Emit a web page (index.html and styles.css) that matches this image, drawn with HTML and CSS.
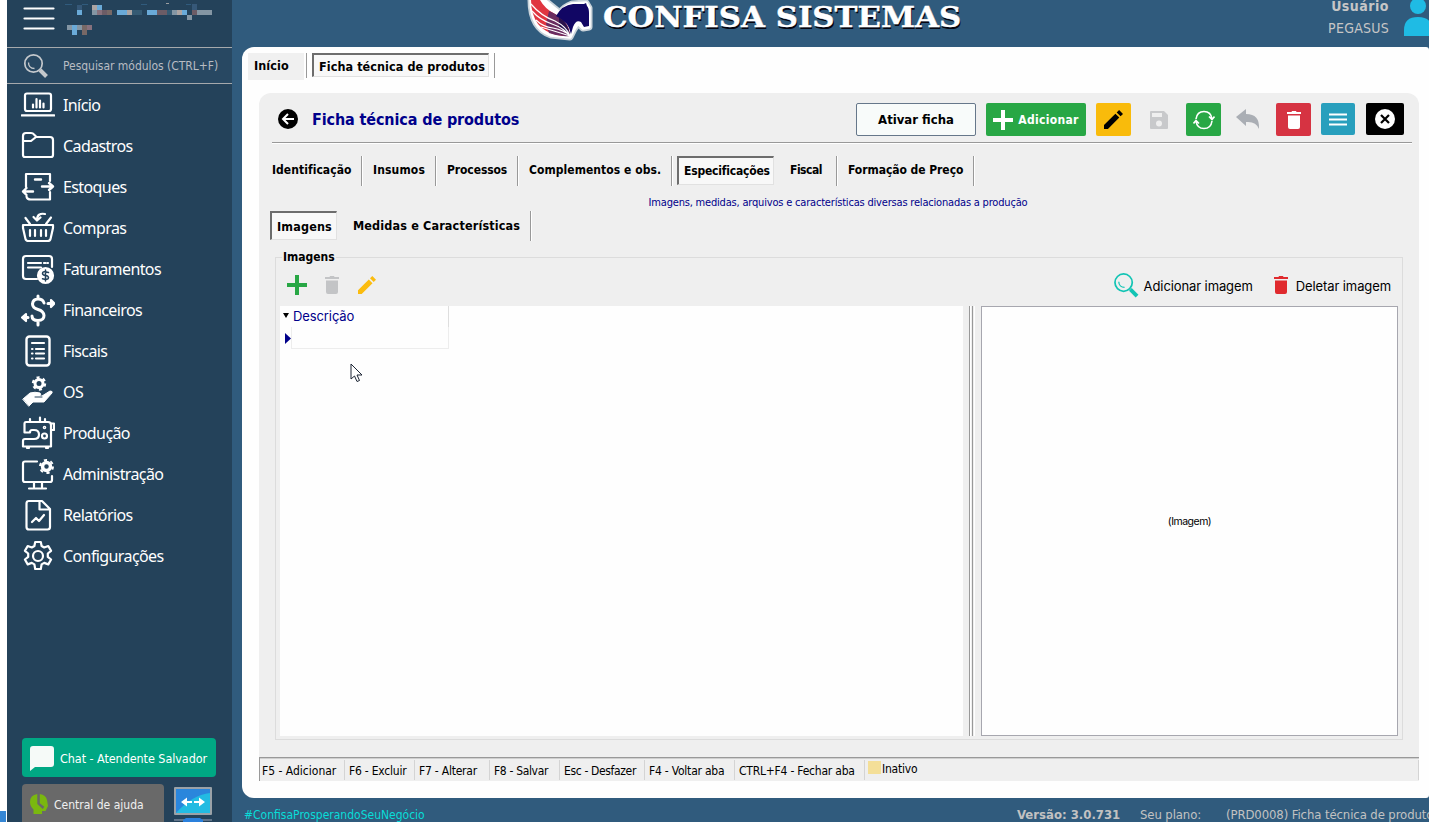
FILE: index.html
```html
<!DOCTYPE html>
<html lang="pt-BR">
<head>
<meta charset="utf-8">
<title>Confisa Sistemas</title>
<link rel="stylesheet" href="styles.css">
</head>
<body>
<div class="edge"><div class="edge-mark"></div></div>
<aside class="sidebar">
  <div class="side-head">
    <svg class="burger" width="32" height="32" viewBox="0 0 32 32"><path d="M1.500 8.500h29M1.500 18.500h29M1.500 28.500h29" stroke="#fff" stroke-width="2.200" stroke-linecap="round"/></svg>
    <svg class="mosaic" width="150" height="36" viewBox="0 0 150 36" shape-rendering="crispEdges">
      <path fill="#305b7d" d="M0 4h7v1H0zM17 4h6v1h-6zM76 4h6v1h-6zM121 4h5v1h-5z"/><path fill="#9a9da0" d="M101 3h3v1h-3z"/>
      <path fill="#365878" d="M12 5h5v5h-5zM127 4h5v6h-5z"/>
      <path fill="#6aaad8" d="M12 10h5v5h-5zM32 5h5v5h-5zM52 10h10v5H52zM82 10h10v5H82zM117 10h5v5h-5zM7 25h5v10H7z"/>
      <path fill="#aca4a2" d="M27 5h5v5h-5zM62 10h5v5h-5zM112 10h5v5h-5z"/>
      <path fill="#8496a4" d="M27 10h5v5h-5zM107 10h5v5h-5zM132 10h5v5h-5zM137 10h10v5h-10zM122 15h5v5h-5zM2 25h5v5H2zM12 25h5v5h-5z"/>
      <path fill="#87717d" d="M32 10h5v5h-5zM22 25h5v5h-5z"/><path fill="#6c5c66" d="M37 10h10v5H37zM92 10h10v5H92zM127 10h5v5h-5z"/><path fill="#776866" d="M42 10h5v5h-5zM17 25h5v10h-5z"/>
      <path fill="#355a73" d="M67 10h10v5H67zM102 10h5v5h-5z"/>
    </svg>
  </div>
  <div class="search">
    <svg width="26" height="26" viewBox="0 0 26 26" fill="none" stroke="#c4c8cc"><circle cx="10.500" cy="10.500" r="8.700" stroke-width="1.700"/><path d="M5.500 9.500c0 4 2.500 6 6 6" stroke-width="1.300"/><path d="M17 17l6.500 6.500" stroke-width="4"/></svg>
    <span>Pesquisar módulos (CTRL+F)</span>
  </div>
  <nav class="menu">
    <a><svg viewBox="0 0 34 34"><rect x="4" y="5.500" width="26" height="17.500" rx="2"/><path d="M.8 27.300h32.400M12 19.500v-3M15.500 19.500V11M19 19.500v-7M22.500 19.500v-4"/></svg><span>Início</span></a>
    <a><svg viewBox="0 0 34 34"><path d="M2 26V7q0-3 3-3h5q2 0 3 1.500l2.500 2.500H29q3 0 3 3v15q0 2-2 2H4q-2 0-2-2zM2 12h8l5-4"/></svg><span>Cadastros</span></a>
    <a><svg viewBox="0 0 34 34"><path d="M5 14V4h24v7M29 22v7.500H10q-4 0-4.500-3M5 14v3" /><path d="M14 9.500h6M21 16.500h11M28 13l4 3.500-4 3.500M12 21.500H2M5.500 18L2 21.500 5.500 25" stroke-width="2.400"/></svg><span>Estoques</span></a>
    <a><svg viewBox="0 0 34 34"><path d="M2 14h30v3l-2.500 11q-.5 2-3 2h-19q-2.500 0-3-2L2 17zM9 19v6M14 19v6M20 19v6M25 19v6M9 13L4.500 7M25 13l5-6.500M24 3c-5-1-8 1-8 6M12.500 6L16 9.500 19.500 6.500" stroke-width="2.200"/></svg><span>Compras</span></a>
    <a><svg viewBox="0 0 34 34"><path d="M16 27H5q-3 0-3-3V7q0-3 3-3h23q3 0 3 3v8M7 11h13M7 15.500h13M23 11h1.500M26.500 11h.5"/><circle cx="24.500" cy="23.500" r="7.500" fill="#fff"/><path d="M27.500 20.500q-6-2-6 .8 0 2 3 2.200 3 .4 3 2.300 0 2.400-6 1M24.500 18v11" stroke="#24425a" stroke-width="1.500"/></svg><span>Faturamentos</span></a>
    <a><svg viewBox="0 0 34 34"><path d="M23 10q-1-4-6-4T11.500 11q0 4 5.500 5.500t6 6q0 5-6 5t-6-4.500M17 3v3M17 28v4" stroke-width="3"/><path d="M27 10.500h4M24 24.500M7 24.500H3" stroke-width="3"/><path d="M30 7l3.500 3.500L30 14zM5 21l-4 3.500L5 28z" fill="#fff"/></svg><span>Financeiros</span></a>
    <a><svg viewBox="0 0 34 34"><rect x="5.500" y="2.500" width="23" height="29" rx="3" stroke-width="2.400"/><path d="M11 9h12M11 15h.5M15 15h8M11 19.500h.5M15 19.500h8M11 24.500h.5M15 24.500h8"/></svg><span>Fiscais</span></a>
    <a><svg viewBox="0 0 34 34"><circle cx="18" cy="8.500" r="4" stroke-width="3"/><circle cx="18" cy="8.500" r="6" stroke-dasharray="3 3.280" stroke-width="2.400" stroke-linecap="butt"/><path d="M2 24l7-6q5-1.500 10 0 2 2-1 3h-4 7l8-5q3 0 2 2l-8 9H12l-4 4z" fill="#fff" stroke-width="1"/><path d="M14 22h7" stroke="#24425a" stroke-width="1"/></svg><span>OS</span></a>
    <a><svg viewBox="0 0 34 34"><path d="M5 6h22q3 0 3 3v21.500H2V25q0-2 2-2h9q5 0 5-4.500T13 14H11q-2 0-2 2.500H3.500V8q0-2 1.500-2zM30.500 7.500H33V14h-2.500M9 3v3M19 1.500V5M24 3v3M6 32h2M25 32h2"/><circle cx="23.500" cy="20" r="2.500"/><circle cx="23.500" cy="11.500" r=".7"/></svg><span>Produção</span></a>
    <a><svg viewBox="0 0 34 34"><path d="M16 4.500H4q-2 0-2 2V23q0 2 2 2h25q2 0 2-2v-4M13 25v5M21 25v5M8 31.500h17"/><circle cx="25.500" cy="9.500" r="4" stroke-width="3.500"/><circle cx="25.500" cy="9.500" r="6.500" stroke-dasharray="3.200 3.600" stroke-width="2" stroke-linecap="butt"/></svg><span>Administração</span></a>
    <a><svg viewBox="0 0 34 34"><path d="M8 3h13l8 8v18q0 2.500-2.500 2.500H8Q5.500 31.500 5.500 29V5.500Q5.500 3 8 3zM18.500 3.500V11.500H28M11 24l4-4 3 3 5-6" stroke-width="2.200"/></svg><span>Relatórios</span></a>
    <a><svg viewBox="0 0 34 34"><circle cx="17" cy="17" r="5"/><path d="M14.200 3h5.600l.8 4 2.600 1.500 4.100-1.500 2.800 4.900-3.300 2.600v3.400l3.300 2.600-2.800 4.900-4.100-1.500-2.600 1.500-.8 4.600h-5.600l-.8-4.600-2.600-1.500-4.100 1.500-2.800-4.900 3.300-2.600v-3.400l-3.300-2.600L6.700 7l4.100 1.500L13.400 7z"/></svg><span>Configurações</span></a>
  </nav>
  <div class="chat"><svg width="24" height="25" viewBox="0 0 24 25"><path d="M0 25V3q0-3 3-3h18q3 0 3 3v15q0 3-3 3H5z" fill="#f6faf8"/></svg><span>Chat - Atendente Salvador</span></div>
  <div class="side-foot">
    <div class="help"><svg width="18" height="21" viewBox="0 0 18 21"><path d="M7.300 0v10l5.500 5 1.500-2.200-4.500-3.600V0Q16 1 17 6l1 6-2.500 5H12v3H3.500v-4.500Q0 12 0 8 0 1 7.300 0z" fill="#7ab80f"/></svg><span>Central de ajuda</span></div>
    <svg width="38" height="36" viewBox="0 0 38 36"><rect width="38" height="28" rx="1" fill="#9aa2a8"/><path d="M2 2h34v24H2z" fill="#2a86dc"/><path d="M2 26Q18 8 36 6v20z" fill="#22bbe2"/><path d="M7 15l6-4.500V14h5v2h-5v3.500zM31 15l-6-4.500V14h-5v2h5v3.500z" fill="#fff"/><path d="M0 33h38" stroke="#60748a" stroke-width="2"/><path d="M9 36v-3l3-2h14l3 2v3z" fill="#2a80dc"/></svg>
  </div>
</aside>
<main class="main">
  <header class="top">
    <div class="brand">
      <svg width="70" height="44" viewBox="0 0 70 44">
        <path id="mark" d="M8 0Q8 28 28 35l19 2 4-8 4-6 5 5 6-1V8l-3-5-14 1q-8 3-12 9L21 0z" fill="#fff" stroke="#c9d3da" stroke-width="7" stroke-linejoin="round"/>
        <path d="M8 0Q8 28 28 35l19 2 4-8 4-6 5 5 6-1V8l-3-5-14 1q-8 3-12 9L21 0z" fill="#fff" stroke="#fff" stroke-width="3.500" stroke-linejoin="round"/>
        <path d="M8 0h9Q22 9 32 14 46 21 47 36 26 37 15 24 8 14 8 0z" fill="#e03540"/>
        <path d="M26 11Q46 19 47 36 36 37 26 33L23 24z" fill="#6a2c60"/>
        <path d="M36 17Q46 24 47 36L36 27z" fill="#2a124c"/>
        <path d="M8 4q10 12 24 17 12 6 15 15M9 11q8 9 20 13 12 4 18 12M13 20q7 7 17 8 11 2 17 8M18 27q10 3 29 9" stroke="#fff" stroke-width="1.200" fill="none"/>
        <path d="M33 16Q39 5 50 4h11l2-1 1 3q2 2 2 7v13l-5 1-3-5q-5-3-8 5l-2 7Q46 22 33 16z" fill="#110664"/>
      </svg>
      <span class="brand-name">CONFISA SISTEMAS</span>
    </div>
    <div class="user"><div class="user-text"><b>Usuário</b><span>PEGASUS</span></div>
      <svg width="25" height="36" viewBox="0 0 25 36" fill="#1fbbe4"><circle cx="14" cy="6" r="8"/><path d="M0 36v-6q0-13 14-13t14 13v6z"/></svg></div>
  </header>
  <section class="panel">
    <div class="doc-tabs"><div class="doc-tab"><span>Início</span></div><i></i><div class="doc-tab on"><span>Ficha técnica de produtos</span></div><i></i></div>
    <div class="card">
      <div class="card-head">
        <svg width="20" height="20" viewBox="0 0 20 20"><circle cx="10" cy="10" r="10"/><path d="M16 10H5.500M10 5l-5 5 5 5" fill="none" stroke="#fff" stroke-width="2"/></svg>
        <h1>Ficha técnica de produtos</h1>
        <div class="actions">
          <button class="activate">Ativar ficha</button>
          <button class="add"><svg width="20" height="20"><path d="M10 0v20M0 10h20" stroke="#fff" stroke-width="4"/></svg><span>Adicionar</span></button>
          <button class="sq yellow"><svg width="19" height="19" viewBox="0 0 18 18"><path d="M0 14.300V18h3.700L14.500 7.200l-3.700-3.700zM12 2.300L15.700 6 18 3.700 14.300 0z"/></svg></button>
          <svg class="save" width="18" height="18" viewBox="0 0 18 18"><path d="M1 0h13l4 4v13q0 1-1 1H1q-1 0-1-1V1q0-1 1-1z" fill="#c8c9cb"/><path d="M2 2h10v4H2z" fill="#efefef"/><circle cx="9" cy="12.500" r="3" fill="#efefef"/></svg>
          <button class="sq green"><svg width="22" height="20" viewBox="0 0 22 20" fill="none" stroke="#fff" stroke-width="1.600"><path d="M3 9Q4 1.500 11 1.500T19 9M19 11q-1 7.500-8 7.500T3 11M16 6.500l3 3 2.500-3M.5 13.500l2.500-3 3 3"/></svg></button>
          <svg class="undo" width="24" height="22" viewBox="0 0 24 22"><path d="M10 0v5q14 0 13 15-3-8-13-7v4L0 8z" fill="#aaaeb4"/></svg>
          <button class="sq red"><svg width="14" height="18" viewBox="0 0 14 18" fill="#fff"><path d="M0 1h4.500L5 0h4l.5 1H14v2H0zM1 4.500h12V16q0 2-2 2H3q-2 0-2-2z"/></svg></button>
          <button class="sq teal"><svg width="18" height="13"><path d="M0 1.500h18M0 6.500h18M0 11.500h18" stroke="#fff" stroke-width="2"/></svg></button>
          <button class="close"><svg width="20" height="20"><circle cx="10" cy="10" r="10" fill="#fff"/><path d="M6 6l8 8M14 6l-8 8" stroke="#000" stroke-width="2.200"/></svg></button>
        </div>
      </div>
      <div class="tabs">
        <span class="t1">Identificação</span><span class="t2">Insumos</span><span class="t3">Processos</span><span class="t4">Complementos e obs.</span>
        <span class="pressed t5">Especificações</span><span class="t6">Fiscal</span><span class="t7">Formação de Preço</span>
      </div>
      <p class="hint">Imagens, medidas, arquivos e características diversas relacionadas a produção</p>
      <div class="tabs sub"><span class="pressed s1">Imagens</span><span class="s2">Medidas e Características</span></div>
      <div class="group">
        <div class="legend"><span>Imagens</span></div>
        <div class="tools">
          <svg width="20" height="20"><path d="M10 0v20M0 10h20" stroke="#28a745" stroke-width="4"/></svg>
          <svg class="bin" width="14" height="18" viewBox="0 0 14 18" fill="#c3c4c6"><path d="M0 1h4.500L5 0h4l.5 1H14v2H0zM1 4.500h12V16q0 2-2 2H3q-2 0-2-2z"/></svg>
          <svg class="pen" width="18" height="18" viewBox="0 0 18 18" fill="#fbbc0f"><path d="M0 14.300V18h3.700L14.500 7.200l-3.700-3.700zM12 2.300L15.700 6 18 3.700 14.300 0z"/></svg>
          <div class="img-tools">
            <svg width="25" height="25" viewBox="0 0 26 26" fill="none" stroke="#12c4b4"><circle cx="10" cy="10" r="9" stroke-width="1.800"/><path d="M5 9c0 3.500 2.500 6 6 6" stroke-width="1.300"/><path d="M17 17l7 7" stroke-width="4"/></svg>
            <span>Adicionar imagem</span>
            <svg class="del" width="14" height="18" viewBox="0 0 14 18" fill="#e02a2e"><path d="M0 1h4.500L5 0h4l.5 1H14v2H0zM1 4.500h12V16q0 2-2 2H3q-2 0-2-2z"/></svg>
            <span>Deletar imagem</span>
          </div>
        </div>
        <div class="split">
          <div class="grid">
            <div class="grid-head"><svg width="6" height="5"><path d="M0 0h6L3 5z"/></svg><span>Descrição</span></div>
            <div class="grid-row"><svg width="6" height="11"><path d="M0 0l6 5.500L0 11z" fill="#00008a"/></svg><div class="cell"></div></div>
            <svg class="cursor" width="13" height="20" viewBox="0 0 13 20"><path d="M1 1v15l3.500-3 2.500 5.500 2.500-1L7 12h5z" fill="#fff" stroke="#1c2534"/></svg>
          </div>
          <div class="splitter"></div>
          <div class="preview">(Imagem)</div>
        </div>
      </div>
    </div>
    <div class="keys"><span class="k1">F5 - Adicionar</span><span class="k2">F6 - Excluir</span><span class="k3">F7 - Alterar</span><span class="k4">F8 - Salvar</span><span class="k5">Esc - Desfazer</span><span class="k6">F4 - Voltar aba</span><span class="k7">CTRL+F4 - Fechar aba</span><span class="k8"><i></i>Inativo</span></div>
  </section>
  <footer class="foot"><span class="tag">#ConfisaProsperandoSeuNegócio</span><b>Versão: 3.0.731</b><span class="plan">Seu plano:</span><span class="code">(PRD0008) Ficha técnica de produtos</span></footer>
</main>
</body>
</html>
```
FILE: styles.css
```css
* { box-sizing: border-box; }
body { margin: 0; width: 1429px; height: 822px; overflow: hidden; display: flex; background: #305b7d; font-family: "DejaVu Sans Condensed", "DejaVu Sans", Tahoma, sans-serif; font-stretch: condensed; font-size: 12px; color: #000; white-space: nowrap; }
svg { display: block; flex: none; }
button { font: inherit; font-weight: bold; border: 0; border-radius: 2px; padding: 0; display: flex; align-items: center; justify-content: center; height: 33px; }
.edge { width: 7px; background: #fff; display: flex; flex-direction: column; justify-content: flex-end; }
.edge-mark { height: 11px; width: 6px; background: #3586d4; }
.sidebar { width: 225px; background: #24425a; color: #fff; display: flex; flex-direction: column; overflow: hidden; }
.side-head { height: 47px; display: flex; padding-left: 16px; gap: 10px; flex: none; }
.search { height: 37px; flex: none; border-top: 1px solid #a6a9ac; border-bottom: 1px solid #a6a9ac; background: #284862; color: #b8bcc2; display: flex; align-items: center; padding-left: 16px; gap: 14px; letter-spacing: -.03px; }
.menu { display: flex; flex-direction: column; }
.menu a { height: 41px; display: flex; align-items: center; padding-left: 14px; gap: 8px; font-size: 16px; font-family: "Noto Sans", sans-serif; letter-spacing: -.6px; }
.menu svg { width: 34px; height: 34px; fill: none; stroke: #fff; stroke-width: 2.200; stroke-linecap: round; stroke-linejoin: round; }
.chat { margin: 162px 0 0 15px; width: 194px; height: 39px; flex: none; border-radius: 4px; background: #00a884; display: flex; align-items: center; padding: 1px 0 0 8px; gap: 6px; font-size: 12.500px; letter-spacing: -.07px; }
.side-foot { display: flex; margin: 7px 0 0 15px; gap: 10px; }
.side-foot > svg { margin-top: 3px; }
.help { width: 142px; height: 42px; border-radius: 4px; background: #696969; display: flex; align-items: center; padding: 0 0 2px 8px; gap: 6px; color: #f0f0f0; }
.help span { padding-top: 2px; }
.main { width: 1197px; display: flex; flex-direction: column; }
.top { height: 47px; flex: none; display: flex; padding-left: 291px; justify-content: space-between; }
.brand { display: flex; gap: 10px; }
.brand-name { font: bold 28px/36px "DejaVu Serif", serif; color: #fff; text-shadow: 1px 2px 0 #050510; transform: scaleX(1.1); transform-origin: left; -webkit-text-stroke: .4px #fff; }
.user { display: flex; gap: 15px; color: #c6c6c6; font-size: 14px; letter-spacing: .25px; }
.user b { letter-spacing: .5px; }
.user-text { display: flex; flex-direction: column; align-items: flex-end; line-height: 22px; margin-top: -5px; }
.panel { margin-left: 10px; height: 751px; flex: none; background: #fefefe; border-radius: 12px 3px 3px 12px; padding: 6px 10px 0 6px; }
.doc-tabs { height: 27px; display: flex; font-weight: bold; font-size: 12.500px; letter-spacing: .07px; }
.doc-tabs i { width: 1px; height: 25px; background: #999; }
.doc-tab { width: 56px; height: 27px; background: #f0f0f0; padding: 5px 0 0 6px; margin-right: 2px; line-height: 15px; }
.doc-tab.on { width: 177px; height: 24px; margin: 0 5px; border: solid; border-width: 2px 1px 1px 2px; border-color: #6d6d6d #e1e1e1 #e1e1e1 #6d6d6d; background: #f8f8f8; padding: 4px 0 0 5px; }
.card { margin: 13px 0 0 11px; width: 1160px; height: 664px; background: #efefef; border-radius: 12px 12px 0 0; padding-left: 11px; }
.card-head { margin-left: 2px; width: 1140px; height: 50px; border-bottom: 1px solid #999; box-shadow: 0 1px #fff; display: flex; align-items: center; padding: 2px 8px 0 6px; }
h1 { margin: 2px 0 0 14px; font-size: 16px; letter-spacing: -.12px; color: #00008b; }
.actions { margin: 2px 0 0 auto; display: flex; align-items: center; font-size: 13px; }
.activate { width: 120px; border: 1px solid #66778a; background: #f8fbfa; color: #000; margin-right: 10px; }
.add { width: 100px; background: #28a745; color: #fff; gap: 5px; margin-right: 10px; font-size: 12px; letter-spacing: .3px; }
.sq { width: 35px; }
.yellow { background: #f9bb0b; }
.save { margin: 0 18px 0 19px; }
.green { background: #28a745; }
.undo { margin: 0 16px 0 15px; }
.red { background: #d63342; margin-right: 10px; }
.teal { background: #289fbd; margin: 0 11px 1px 0; width: 34px; height: 32px; }
.close { background: #000; width: 38px; height: 32px; margin-bottom: 1px; }
.tabs { display: flex; margin-top: 13px; height: 30px; font-weight: bold; font-size: 12px; line-height: 29px; }
.tabs > span:not(.pressed) { border-right: 1px solid #999; box-shadow: 1px 0 #fff; height: 30px; }
.tabs .t1 { width: 90px; margin-left: 2px; letter-spacing: .05px; }
.tabs .t2 { width: 74px; padding-left: 11px; letter-spacing: .15px; }
.tabs .t3 { width: 82px; padding-left: 11px; letter-spacing: -.1px; }
.tabs .t4 { width: 154px; padding-left: 11px; letter-spacing: .05px; }
.pressed { border: solid; border-width: 2px 1px 1px 2px; border-color: #6d6d6d #e1e1e1 #e1e1e1 #6d6d6d; background: #f8f8f8; height: 29px; line-height: 27px; padding-left: 5px; }
.tabs .t5 { width: 97px; margin: 0 4px 0 5px; letter-spacing: -.2px; }
.tabs .t6 { width: 59px; padding-left: 12px; letter-spacing: -.5px; }
.tabs .t7 { width: 137px; padding-left: 11px; letter-spacing: -.05px; }
.hint { margin: 8px 0 0 -13px; text-align: center; color: #00008b; font-size: 11px; line-height: 17px; height: 17px; letter-spacing: -.19px; }
.tabs.sub { margin-top: 0; font-size: 12.500px; letter-spacing: .15px; }
.tabs .s1 { width: 67px; margin-right: 4px; }
.tabs .s2 { width: 190px; padding-left: 12px; }
.group { margin: 16px 0 0 5px; width: 1128px; height: 483px; border: 1px solid #dcdcdc; padding: 0 4px; }
.legend { height: 14px; margin-top: -8px; line-height: 15px; font-weight: bold; }
.legend span { background: #efefef; padding: 0 1px; margin-left: 2px; }
.tools { height: 42px; display: flex; align-items: center; padding: 0 7px; font-family: Inter, sans-serif; font-size: 13px; }
.bin { margin-left: 18px; }
.pen { margin-left: 19px; }
.img-tools { margin-left: auto; display: flex; align-items: center; gap: 5px; letter-spacing: -.1px; }
.img-tools span { padding-top: 1px; }
.del { margin: 0 3px 0 16px; }
.split { display: flex; height: 430px; }
.grid { width: 683px; background: #fefefe; position: relative; }
.grid-head { width: 169px; height: 21px; border-right: 1px solid #dedede; display: flex; align-items: center; padding: 0 0 2px 3px; gap: 4px; color: #00008b; font: 13px Inter, sans-serif; letter-spacing: -.1px; }
.grid-row { width: 169px; height: 22px; display: flex; align-items: center; padding-left: 5px; }
.cell { width: 158px; height: 22px; border: 1px solid #ededed; border-top: 0; }
.cursor { position: absolute; left: 70px; top: 57px; }
.splitter { width: 6px; margin: 0 6px; border: solid #999; border-width: 0 1px; background: linear-gradient(90deg, #fff 1px, #efefef 1px 2px, #999 2px 3px, #efefef 3px); border-right-color: #fff; }
.preview { width: 417px; border: 1px solid #a7a7af; background: #fefefe; display: flex; align-items: center; justify-content: center; font: 10.500px Inter, sans-serif; letter-spacing: -.5px; }
.keys { margin-left: 11px; width: 1160px; height: 24px; background: #efefef; border-top: 1px solid #999; box-shadow: inset 0 1px #cfcfcf; border-left: 1px solid #999; display: flex; line-height: 22px; padding-top: 2px; letter-spacing: -.22px; }
.keys > span { border-right: 1px solid #d4d4d4; padding-left: 4px; height: 20px; }
.keys .k1 { width: 85px; padding-left: 2px; letter-spacing: 0; }
.keys .k2 { width: 70px; }
.keys .k3 { width: 75px; }
.keys .k4 { width: 70px; letter-spacing: -.34px; }
.keys .k5 { width: 85px; letter-spacing: -.35px; }
.keys .k6 { width: 90px; }
.keys .k7 { width: 130px; }
.keys .k8 { flex: 1; padding-left: 3px; display: flex; line-height: 19px; }
.k8 i { width: 13px; height: 13px; margin: 1px 1px 0 0; background: #f4df98; }
.foot { height: 24px; display: flex; color: #c2c2c2; font-size: 13px; line-height: 33px; padding-left: 12px; }
.tag { color: #08ddd8; width: 773px; flex: none; font-size: 12px; line-height: 34px; }
.foot b { width: 103px; flex: none; }
.plan { margin-left: 20px; width: 61px; flex: none; letter-spacing: -.11px; }
.code { margin-left: 25px; width: 203px; overflow: hidden; letter-spacing: -.1px; }
```
